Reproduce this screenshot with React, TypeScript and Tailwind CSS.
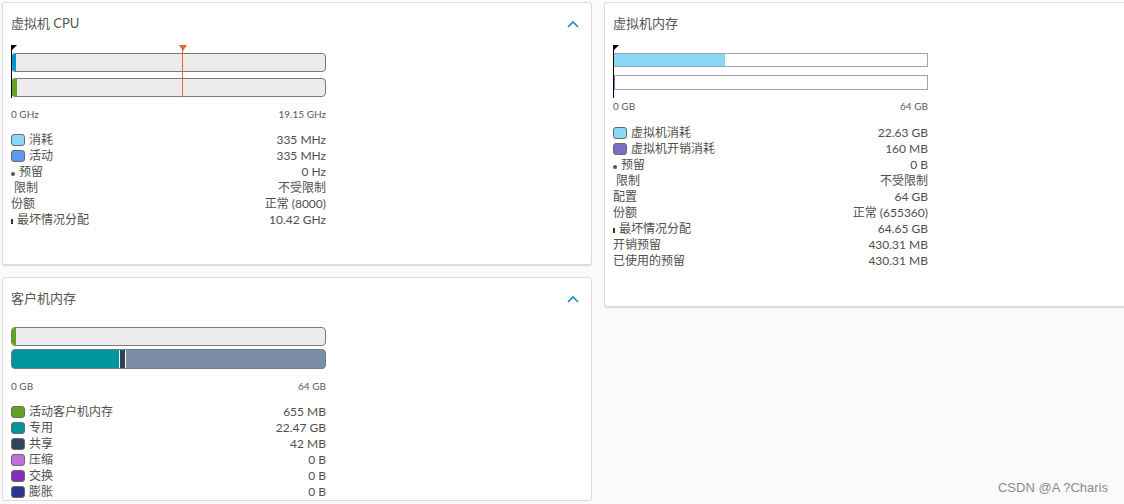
import React from 'react';

const font = { fontFamily: 'Lato, "Noto Sans CJK SC", sans-serif' };

type Row = { label: string; value: string; swatch?: string; mark?: 'dot' | 'tick' | 'indent' };

const cpuRows: Row[] = [
  { label: '消耗', value: '335 MHz', swatch: 'bg-[#89d8f8]' },
  { label: '活动', value: '335 MHz', swatch: 'bg-[#5b9cf2]' },
  { label: '预留', value: '0 Hz', mark: 'dot' },
  { label: '限制', value: '不受限制', mark: 'indent' },
  { label: '份额', value: '正常 (8000)' },
  { label: '最坏情况分配', value: '10.42 GHz', mark: 'tick' },
];

const guestRows: Row[] = [
  { label: '活动客户机内存', value: '655 MB', swatch: 'bg-[#62a420]' },
  { label: '专用', value: '22.47 GB', swatch: 'bg-[#00959f]' },
  { label: '共享', value: '42 MB', swatch: 'bg-[#314459]' },
  { label: '压缩', value: '0 B', swatch: 'bg-[#c070dc]' },
  { label: '交换', value: '0 B', swatch: 'bg-[#8c2cba]' },
  { label: '膨胀', value: '0 B', swatch: 'bg-[#2c3592]' },
];

const vmMemRows: Row[] = [
  { label: '虚拟机消耗', value: '22.63 GB', swatch: 'bg-[#89d8f8]' },
  { label: '虚拟机开销消耗', value: '160 MB', swatch: 'bg-[#7d6cc6]' },
  { label: '预留', value: '0 B', mark: 'dot' },
  { label: '限制', value: '不受限制', mark: 'indent' },
  { label: '配置', value: '64 GB' },
  { label: '份额', value: '正常 (655360)' },
  { label: '最坏情况分配', value: '64.65 GB', mark: 'tick' },
  { label: '开销预留', value: '430.31 MB' },
  { label: '已使用的预留', value: '430.31 MB' },
];

function Chevron() {
  return (
    <svg width="12" height="8" viewBox="0 0 12 8" className="mt-[6px] mr-[12px]">
      <polyline points="1,7 6,2 11,7" fill="none" stroke="#1a8ad0" strokeWidth="1.6" />
    </svg>
  );
}

function Legend({ rows }: { rows: Row[] }) {
  return (
    <div className="w-[315px] flex flex-col text-[12px] leading-[16px] text-[#4f4f4f]">
      {rows.map(r => (
        <div key={r.label} className="flex items-center justify-between h-[16px]">
          <div className="flex items-center">
            {r.swatch && <span className={`w-[14px] h-[12px] rounded-[3px] border border-[#6a6a6a] mr-[4px] ${r.swatch}`} />}
            {r.mark === 'dot' && <span className="w-[4px] h-[4px] rounded-full bg-[#555] mr-[4px] mt-[3px]" />}
            {r.mark === 'tick' && <span className="w-[2px] h-[5px] bg-[#333] mr-[4px] mt-[3px]" />}
            <span className={r.mark === 'indent' ? 'pl-[3px]' : ''}>{r.label}</span>
          </div>
          <span>{r.value}</span>
        </div>
      ))}
    </div>
  );
}

function Axis({ min, max }: { min: string; max: string }) {
  return (
    <div className="w-[315px] flex justify-between text-[10px] leading-[12px] text-[#5a5a5a]">
      <span>{min}</span>
      <span>{max}</span>
    </div>
  );
}

function StartMark() {
  return (
    <>
      <div className="absolute left-0 top-0 bottom-0 w-px bg-black" />
      <svg width="6" height="6" viewBox="0 0 6 6" className="absolute left-0 top-0">
        <polygon points="0,0 6,0 0,6" fill="#000" />
      </svg>
    </>
  );
}

function CpuCard() {
  return (
    <div className="h-[263px] bg-white border border-[#dcdcdc] rounded-[3px] shadow-[0_1px_1px_#d8d8d8] pl-[8px] pt-[11px]">
      <div className="flex justify-between">
        <h2 className="text-[13px] leading-[18px] text-[#565656]">虚拟机 CPU</h2>
        <Chevron />
      </div>
      <div className="relative w-[315px] h-[53px] mt-[13px] pt-[8px] flex flex-col gap-[6px]">
        <div className="h-[19px] rounded-[4px] border border-[#7a7a7a] bg-[#ececec] overflow-hidden flex">
          <div className="w-[4px] bg-[#0095d3]" />
        </div>
        <div className="h-[19px] rounded-[4px] border border-[#7a7a7a] bg-[#ececec] overflow-hidden flex">
          <div className="w-[5px] bg-[#62a420]" />
        </div>
        <StartMark />
        <div className="absolute left-[171px] top-0 bottom-[1px] w-px bg-[#e2652c]" />
        <svg width="8" height="6" viewBox="0 0 8 6" className="absolute left-[167.5px] top-0">
          <polygon points="0,0 8,0 4,6" fill="#e2652c" />
        </svg>
      </div>
      <div className="mt-[10px]">
        <Axis min="0 GHz" max="19.15 GHz" />
      </div>
      <div className="mt-[12px]">
        <Legend rows={cpuRows} />
      </div>
    </div>
  );
}

function GuestCard() {
  return (
    <div className="h-[224px] bg-white border border-[#dcdcdc] rounded-[3px] pl-[8px] pt-[11px]">
      <div className="flex justify-between">
        <h2 className="text-[13px] leading-[18px] text-[#565656]">客户机内存</h2>
        <Chevron />
      </div>
      <div className="w-[315px] mt-[20px] flex flex-col gap-[3px]">
        <div className="h-[19px] rounded-[4px] border border-[#7a7a7a] bg-[#ececec] overflow-hidden flex">
          <div className="w-[4px] bg-[#62a420]" />
        </div>
        <div className="h-[20px] rounded-[4px] border border-[#6b7d90] bg-[#7b8ea5] overflow-hidden flex">
          <div className="w-[107px] bg-[#00959f]" />
          <div className="w-px bg-white" />
          <div className="w-[5px] bg-[#2f4356]" />
          <div className="w-px bg-white" />
        </div>
      </div>
      <div className="mt-[11px]">
        <Axis min="0 GB" max="64 GB" />
      </div>
      <div className="mt-[12px]">
        <Legend rows={guestRows} />
      </div>
    </div>
  );
}

function VmMemCard() {
  return (
    <div className="w-[530px] shrink-0 h-[305px] bg-white border border-[#dcdcdc] rounded-[3px] shadow-[0_1px_1px_#d8d8d8] pl-[8px] pt-[11px]">
      <h2 className="text-[13px] leading-[18px] text-[#565656]">虚拟机内存</h2>
      <div className="relative w-[315px] h-[53px] mt-[13px] pt-[8px] flex flex-col gap-[8px]">
        <div className="h-[14px] border border-[#9aa4ab] bg-white flex">
          <div className="w-[111px] bg-[#89d8f8]" />
        </div>
        <div className="h-[15px] border border-[#9aa4ab] bg-white flex">
          <div className="w-px bg-[#7d6cc6]" />
        </div>
        <StartMark />
      </div>
      <div className="mt-[2px]">
        <Axis min="0 GB" max="64 GB" />
      </div>
      <div className="mt-[13px]">
        <Legend rows={vmMemRows} />
      </div>
    </div>
  );
}

export default function App() {
  return (
    <div style={font} className="w-[1124px] h-[504px] overflow-hidden bg-[#fafafa] relative">
      <div className="flex gap-[12px] pt-[2px] pl-[2px]">
        <div className="w-[590px] shrink-0 flex flex-col gap-[12px]">
          <CpuCard />
          <GuestCard />
        </div>
        <VmMemCard />
      </div>
      <div className="absolute right-[16px] bottom-[7px] text-[13px] text-[#8a8a8a]" style={{ fontFamily: '"Liberation Sans", sans-serif' }}>
        CSDN @A ?Charis
      </div>
    </div>
  );
}
